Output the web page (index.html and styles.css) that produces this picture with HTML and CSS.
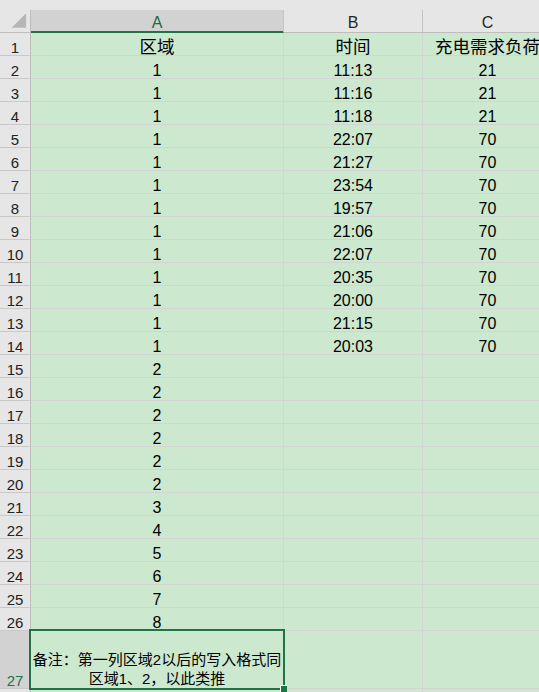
FILE: index.html
```html
<!DOCTYPE html>
<html lang="zh">
<head>
<meta charset="utf-8">
<title>Sheet</title>
<link rel="stylesheet" href="styles.css">
</head>
<body>
<div class="sheet">
  <div class="strip"></div>

  <div class="corner"><svg width="31" height="23" viewBox="0 0 31 23"><polygon points="27,3 27,18 12,18" fill="#b6b6b6"/></svg></div>
  <div class="ch ch-sel">A</div>
  <div class="ch">B</div>
  <div class="ch">C</div>

  <div class="rh">1</div><div class="c cjk">区域</div><div class="c cjk">时间</div><div class="c cjk">充电需求负荷</div>
  <div class="rh">2</div><div class="c">1</div><div class="c">11:13</div><div class="c">21</div>
  <div class="rh">3</div><div class="c">1</div><div class="c">11:16</div><div class="c">21</div>
  <div class="rh">4</div><div class="c">1</div><div class="c">11:18</div><div class="c">21</div>
  <div class="rh">5</div><div class="c">1</div><div class="c">22:07</div><div class="c">70</div>
  <div class="rh">6</div><div class="c">1</div><div class="c">21:27</div><div class="c">70</div>
  <div class="rh">7</div><div class="c">1</div><div class="c">23:54</div><div class="c">70</div>
  <div class="rh">8</div><div class="c">1</div><div class="c">19:57</div><div class="c">70</div>
  <div class="rh">9</div><div class="c">1</div><div class="c">21:06</div><div class="c">70</div>
  <div class="rh">10</div><div class="c">1</div><div class="c">22:07</div><div class="c">70</div>
  <div class="rh">11</div><div class="c">1</div><div class="c">20:35</div><div class="c">70</div>
  <div class="rh">12</div><div class="c">1</div><div class="c">20:00</div><div class="c">70</div>
  <div class="rh">13</div><div class="c">1</div><div class="c">21:15</div><div class="c">70</div>
  <div class="rh">14</div><div class="c">1</div><div class="c">20:03</div><div class="c">70</div>
  <div class="rh">15</div><div class="c">2</div><div class="c"></div><div class="c"></div>
  <div class="rh">16</div><div class="c">2</div><div class="c"></div><div class="c"></div>
  <div class="rh">17</div><div class="c">2</div><div class="c"></div><div class="c"></div>
  <div class="rh">18</div><div class="c">2</div><div class="c"></div><div class="c"></div>
  <div class="rh">19</div><div class="c">2</div><div class="c"></div><div class="c"></div>
  <div class="rh">20</div><div class="c">2</div><div class="c"></div><div class="c"></div>
  <div class="rh">21</div><div class="c">3</div><div class="c"></div><div class="c"></div>
  <div class="rh">22</div><div class="c">4</div><div class="c"></div><div class="c"></div>
  <div class="rh">23</div><div class="c">5</div><div class="c"></div><div class="c"></div>
  <div class="rh">24</div><div class="c">6</div><div class="c"></div><div class="c"></div>
  <div class="rh">25</div><div class="c">7</div><div class="c"></div><div class="c"></div>
  <div class="rh">26</div><div class="c">8</div><div class="c"></div><div class="c"></div>
  <div class="rh rh-sel">27</div>
  <div class="c note">
    <span class="note-text">备注：第一列区域2以后的写入格式同<br>区域1、2，以此类推</span>
    <div class="selbox"><div class="handle"></div></div>
  </div>
  <div class="c"></div><div class="c"></div>
  <div class="rh"></div><div class="c"></div><div class="c"></div><div class="c"></div>
</div>
</body>
</html>
```

FILE: styles.css
```css
* { box-sizing: border-box; }
html, body {
  margin: 0;
  padding: 0;
  width: 539px;
  height: 692px;
  overflow: hidden;
  background: #cce8cf;
}
.sheet {
  display: grid;
  grid-template-columns: 31px 253px 139px 130px;
  grid-template-rows: 10px 23px repeat(26, 23px) 58px 23px;
  width: 553px;
  font-family: "Liberation Sans", "Noto Sans CJK SC", sans-serif;
  color: #000;
}
.strip {
  grid-column: 1 / -1;
  background: #e6e6e6;
}
.corner {
  background: #e6e6e6;
  border-right: 1px solid #bdbdbd;
  border-bottom: 1px solid #bdbdbd;
  display: flex;
}
.ch {
  background: #e6e6e6;
  border-right: 1px solid #c4c4c4;
  border-bottom: 1px solid #bdbdbd;
  display: flex;
  align-items: flex-end;
  justify-content: center;
  font-size: 16px;
  line-height: 15px;
  padding-bottom: 2px;
  color: #262626;
}
.ch-sel {
  background: #d2d2d2;
  color: #1d6b40;
  border-bottom-color: #217346;
  box-shadow: inset 0 -1px 0 #217346;
}
.rh {
  background: #e6e6e6;
  border-right: 1px solid #bdbdbd;
  border-bottom: 1px solid #c8c8c8;
  display: flex;
  align-items: flex-end;
  justify-content: center;
  font-size: 15px;
  line-height: 15px;
  color: #222;
}
.rh-sel {
  background: #d2d2d2;
  color: #217346;
}
.c {
  background: #cce8cf;
  border-right: 1px solid #d4d4d4;
  border-bottom: 1px solid #d4d4d4;
  display: flex;
  align-items: flex-end;
  justify-content: center;
  font-size: 16px;
  line-height: 15px;
  white-space: nowrap;
  overflow: hidden;
}
.cjk {
  font-size: 17.5px;
}
.note {
  position: relative;
  overflow: visible;
  font-size: 15px;
  line-height: 19px;
  text-align: center;
  z-index: 1;
}
.note-text {
  display: block;
  width: 100%;
}
.selbox {
  position: absolute;
  left: -2px;
  top: -2px;
  width: 256px;
  height: 61px;
  border: 2px solid #217346;
  pointer-events: none;
}
.handle {
  position: absolute;
  right: -4px;
  bottom: -4px;
  width: 7px;
  height: 7px;
  background: #217346;
  border-top: 1px solid #fff;
  border-left: 1px solid #fff;
}
```
